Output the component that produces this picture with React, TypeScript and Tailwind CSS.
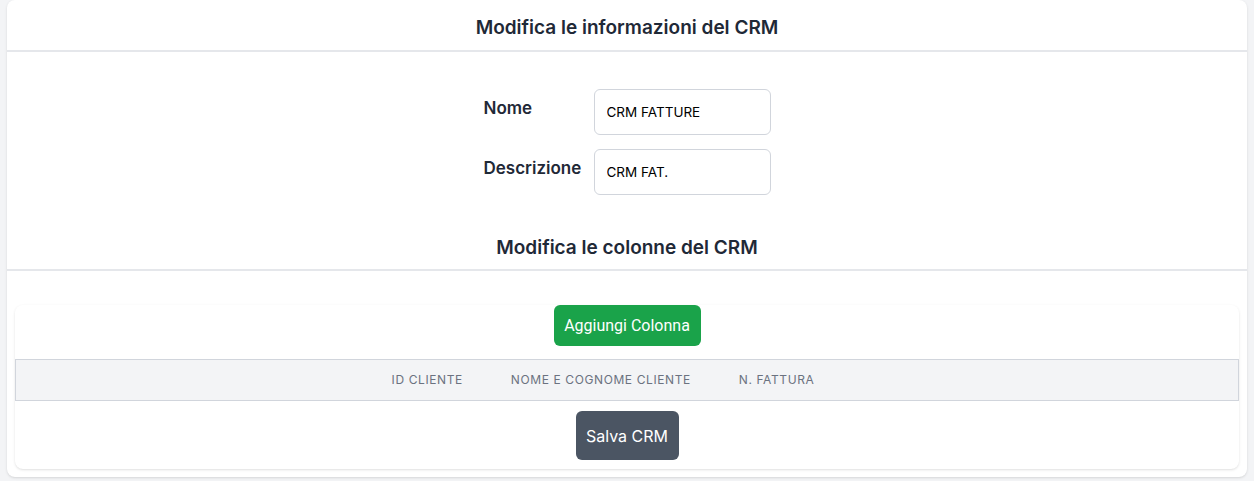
import React from 'react';

const columns = ['ID Cliente', 'Nome e Cognome Cliente', 'N. Fattura'];

const App: React.FC = () => {
  return (
    <div className="min-h-screen bg-gray-100 px-[7px] pb-1 font-['Inter',sans-serif] text-[#1f2937]">
      <div className="bg-white rounded-lg shadow-sm pb-2">
        {/* Info CRM */}
        <div className="h-[52px] flex items-center justify-center border-b-2 border-gray-200 pt-[7px]">
          <h2 className="text-[19px] font-semibold">Modifica le informazioni del CRM</h2>
        </div>

        <div className="flex justify-center mt-[37px]">
          <div className="flex flex-col gap-[14px]">
            <div className="flex items-start">
              <label className="w-[110px] pt-[7px] text-[17px] font-semibold">Nome</label>
              <input
                defaultValue="CRM FATTURE"
                className="w-[177px] h-[46px] px-3 rounded-md border border-gray-300 text-[13.5px] text-black outline-none"
              />
            </div>
            <div className="flex items-start">
              <label className="w-[110px] pt-[7px] text-[17px] font-semibold">Descrizione</label>
              <input
                defaultValue="CRM FAT."
                className="w-[177px] h-[46px] px-3 rounded-md border border-gray-300 text-[13.5px] text-black outline-none"
              />
            </div>
          </div>
        </div>

        {/* Colonne CRM */}
        <div className="mt-[32px] h-[44px] flex items-center justify-center border-b-2 border-gray-200">
          <h2 className="text-[19px] font-semibold">Modifica le colonne del CRM</h2>
        </div>

        <div className="mx-2 mt-[34px] rounded-lg shadow-sm flex flex-col items-center">
          <button className="w-[147px] h-[41px] rounded-md bg-[#1aa34a] text-white text-[16px] font-['Roboto',sans-serif]">
            Aggiungi Colonna
          </button>

          <div className="mt-[13px] w-full h-[42px] bg-gray-100 border border-gray-300 flex justify-center items-center">
            {columns.map((c) => (
              <div key={c} className="px-6 text-[12px] uppercase tracking-wider text-[#6b7280] font-normal">
                {c}
              </div>
            ))}
            <div className="w-12" />
          </div>

          <button className="mt-[10px] mb-[9px] w-[103px] h-[49px] rounded-md bg-[#4b5563] text-white text-[16px]">
            Salva CRM
          </button>
        </div>
      </div>
    </div>
  );
};

export default App;
